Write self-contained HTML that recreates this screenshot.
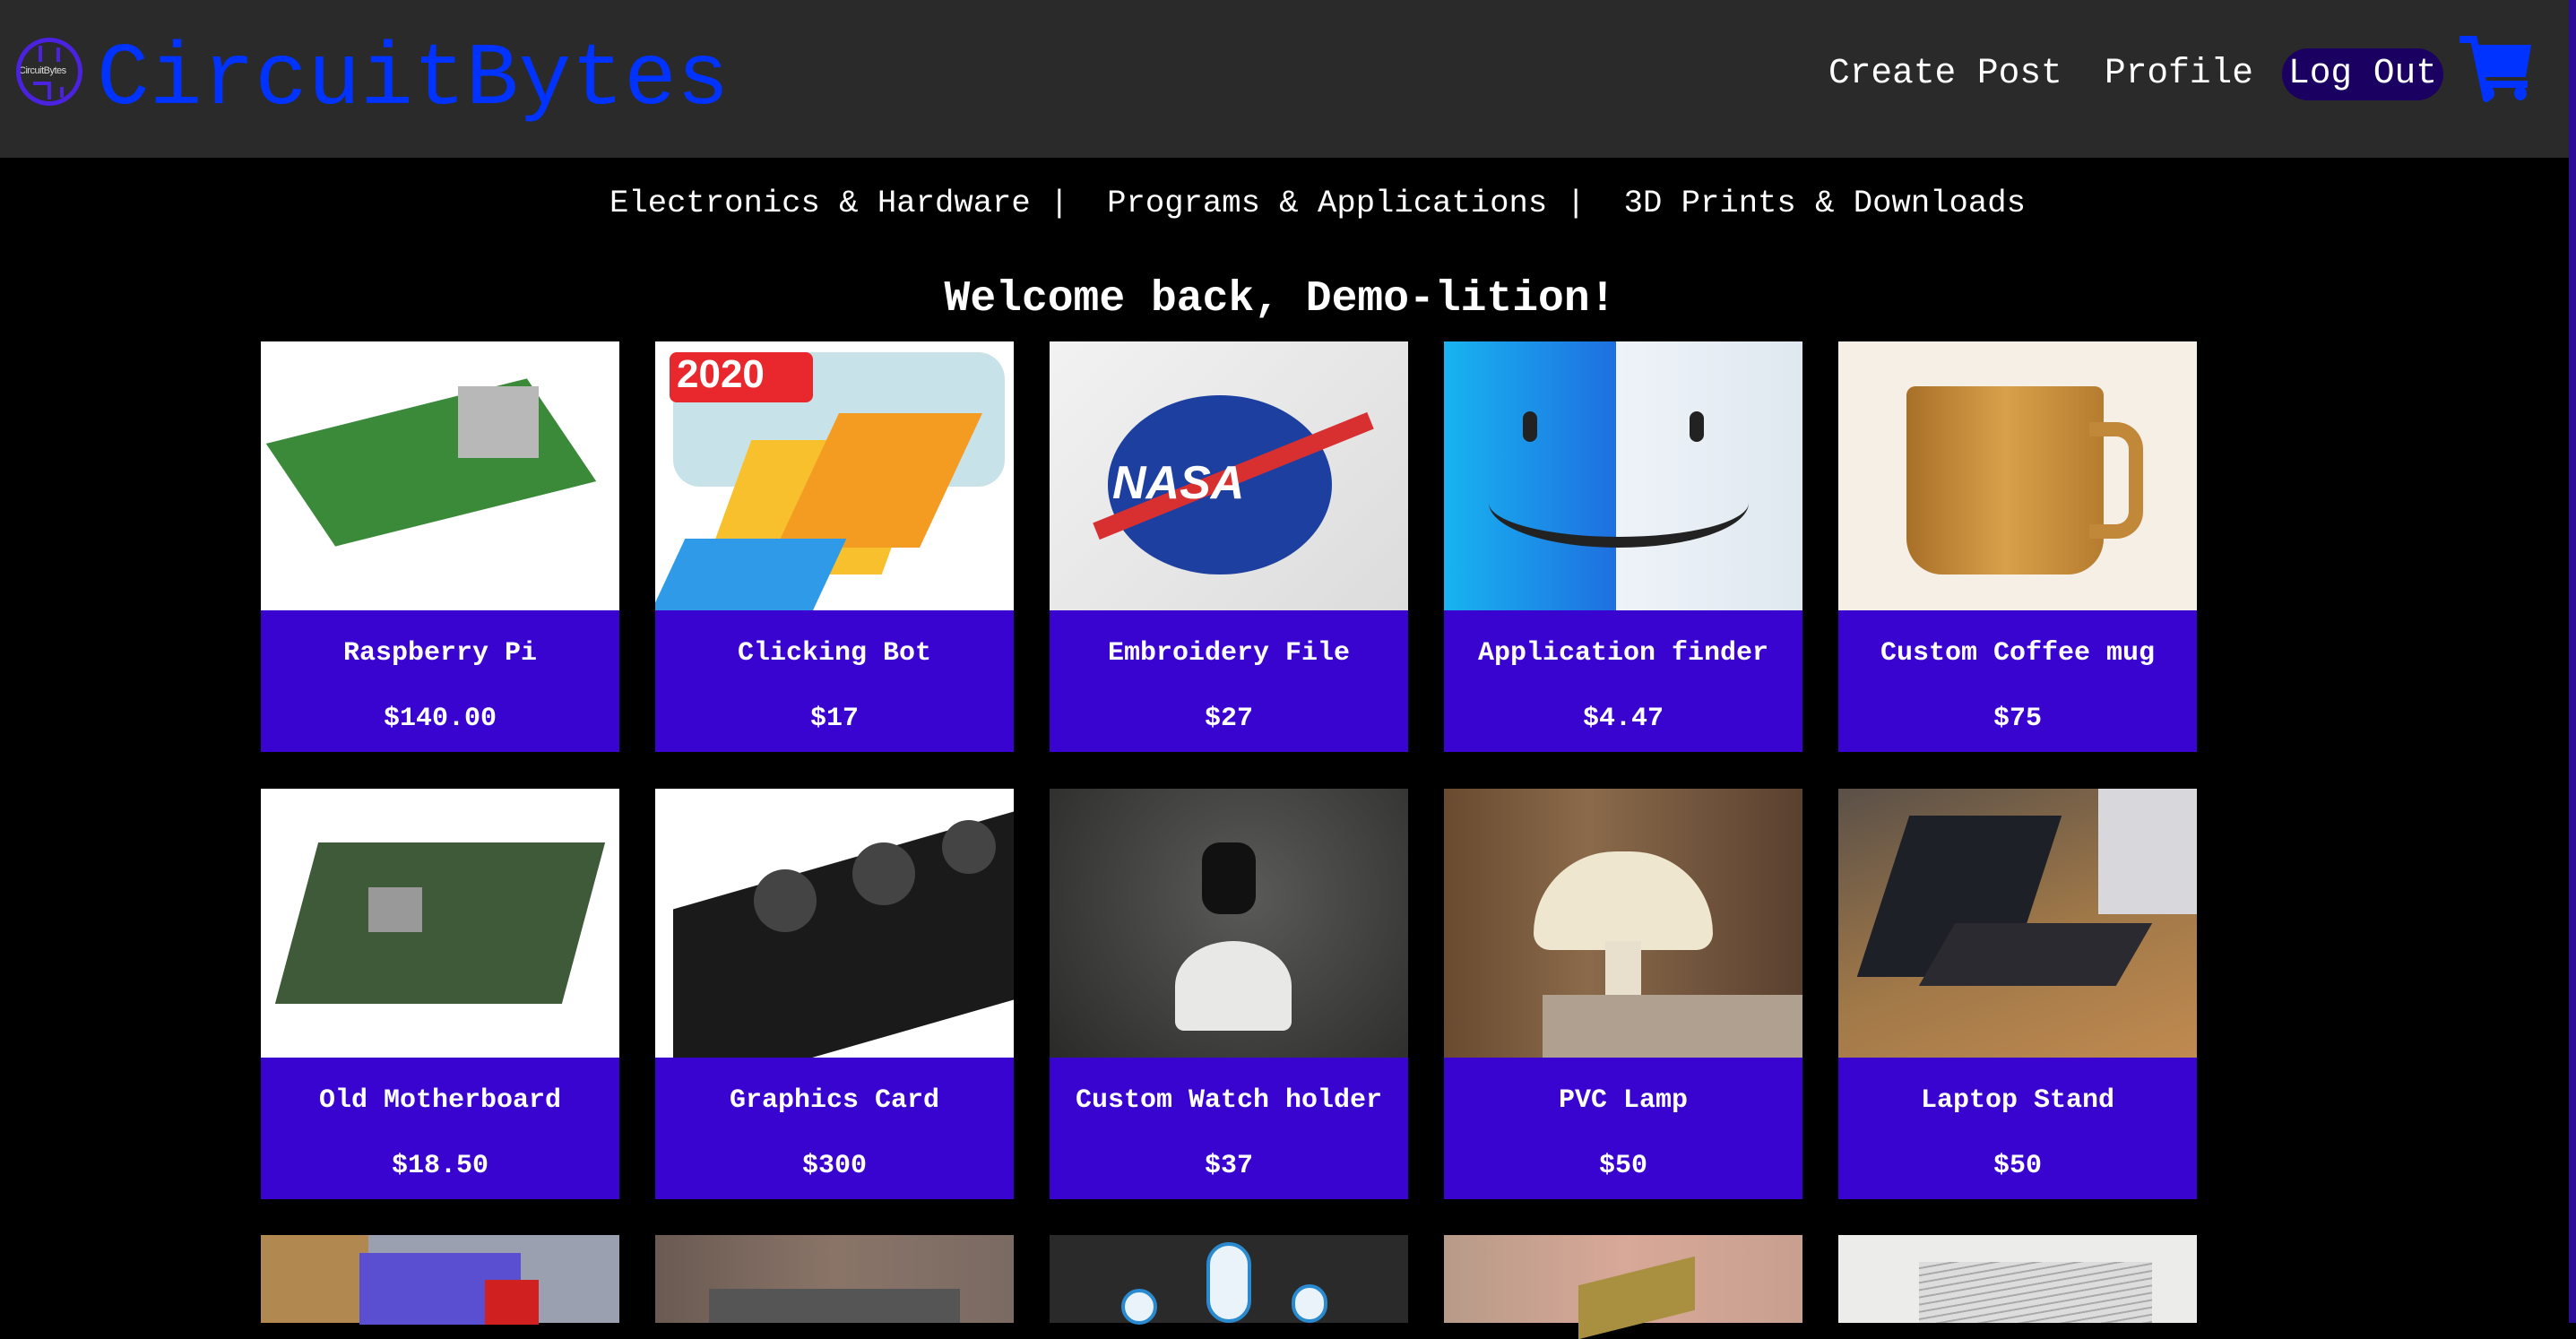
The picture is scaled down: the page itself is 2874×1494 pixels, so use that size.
<!DOCTYPE html>
<html><head><meta charset="utf-8"><style>
*{margin:0;padding:0;box-sizing:border-box}
html,body{width:2874px;height:1476px;overflow:hidden;background:#000;font-family:"Liberation Mono",monospace}
.hdr{position:absolute;left:0;top:0;width:2874px;height:176px;background:#2a2a2a}
.bar{position:absolute;left:2866px;top:0;width:8px;height:1476px;background:#2a0c96}
.logo{position:absolute;left:18px;top:42px;width:74px;height:76px;border-radius:50%;border:5px solid #4a22e0;background:#2a2a2a;overflow:hidden}
.logo i{position:absolute;background:#4a22e0}
.logo span{position:absolute;left:-2px;top:26px;font:11px "Liberation Sans",sans-serif;color:#ddd;letter-spacing:-0.5px}
.brand{position:absolute;left:108px;top:40px;font-size:98px;color:#0033ff;line-height:100px}
.nav{position:absolute;top:58px;font-size:39.5px;color:#fff;line-height:48px}
.pill{position:absolute;left:2546px;top:54px;width:180px;height:58px;border-radius:29px;background:#1a0060}
.cats{position:absolute;left:37px;width:2866px;top:204px;text-align:center;color:#fff;font-size:35.6px;line-height:46px;white-space:pre}
.wel{position:absolute;left:0;width:2856px;top:306px;text-align:center;color:#fff;font-size:48px;font-weight:bold;line-height:56px}
.card{position:absolute;width:400px;height:458px;background:#3a04d0}
.img{position:absolute;left:0;top:0;width:400px;height:300px;overflow:hidden}
.t{position:absolute;left:0;width:400px;top:330px;text-align:center;color:#fff;font-weight:bold;font-size:30px;line-height:36px}
.p{position:absolute;left:0;width:400px;top:403px;text-align:center;color:#fff;font-weight:bold;font-size:30px;line-height:36px}
.a{position:absolute}
</style></head><body>
<div class="hdr"></div>
<div class="logo"><i style="left:20px;top:4px;width:4px;height:18px"></i><i style="left:40px;top:6px;width:4px;height:16px"></i><i style="left:14px;top:44px;width:20px;height:4px"></i><i style="left:30px;top:48px;width:4px;height:16px"></i><i style="left:44px;top:50px;width:4px;height:12px"></i><span>CircuitBytes</span></div>
<div class="brand">CircuitBytes</div>
<div class="nav" style="left:2040px">Create Post</div>
<div class="nav" style="left:2348px">Profile</div>
<div class="pill"></div>
<div class="nav" style="left:2553px">Log Out</div>
<svg class="a" style="left:2744px;top:40px" width="84" height="76" viewBox="0 0 84 76">
<path d="M2 4 H16 L30 70" stroke="#0033ff" stroke-width="8" fill="none" stroke-linecap="round"/>
<path d="M18 10 H80 L74 46 H28 Z" fill="#0033ff"/>
<rect x="26" y="50" width="50" height="8" fill="#0033ff"/>
<ellipse cx="32" cy="64" rx="7" ry="8" fill="#0033ff"/><ellipse cx="68" cy="64" rx="7" ry="8" fill="#0033ff"/>
</svg>
<div class="bar"></div>
<div class="cats">Electronics &amp; Hardware |  Programs &amp; Applications |  3D Prints &amp; Downloads</div>
<div class="wel">Welcome back, Demo-lition!</div>

<!-- row 1 -->
<div class="card" style="left:291px;top:381px"><div class="img" style="background:#fff"><div class="a" style="left:40px;top:70px;width:300px;height:130px;background:#3a8a3a;transform:rotate(-14deg) skewX(20deg)"></div><div class="a" style="left:220px;top:50px;width:90px;height:80px;background:#b8b8b8"></div></div><div class="t">Raspberry Pi</div><div class="p">$140.00</div></div>
<div class="card" style="left:731px;top:381px"><div class="img" style="background:#fff"><div class="a" style="left:20px;top:12px;width:370px;height:150px;border-radius:30px;background:#c8e2ea"></div><div class="a" style="left:16px;top:12px;width:160px;height:56px;border-radius:8px;background:#e8282c"></div><div class="a" style="left:24px;top:12px;color:#fff;font:bold 44px 'Liberation Sans',sans-serif">2020</div><div class="a" style="left:80px;top:110px;width:200px;height:150px;background:#f7c02c;transform:skewX(-20deg)"></div><div class="a" style="left:170px;top:80px;width:160px;height:150px;background:#f49c22;transform:skewX(-25deg)"></div><div class="a" style="left:10px;top:220px;width:180px;height:100px;background:#2f9ae8;transform:skewX(-25deg)"></div></div><div class="t">Clicking Bot</div><div class="p">$17</div></div>
<div class="card" style="left:1171px;top:381px"><div class="img" style="background:linear-gradient(135deg,#f2f2f2,#dcdcdc)"><div class="a" style="left:65px;top:60px;width:250px;height:200px;border-radius:50%;background:#1c3fa0"></div><div class="a" style="left:40px;top:140px;width:330px;height:20px;background:#d83030;transform:rotate(-22deg)"></div><div class="a" style="left:70px;top:128px;color:#fff;font:bold italic 52px 'Liberation Sans',sans-serif">NASA</div></div><div class="t">Embroidery File</div><div class="p">$27</div></div>
<div class="card" style="left:1611px;top:381px"><div class="img" style="background:linear-gradient(90deg,#18b4f0 0%,#1e6fe0 48%,#eef3f8 48%,#dfe8f0 100%)"><div class="a" style="left:88px;top:78px;width:16px;height:34px;border-radius:8px;background:#222"></div><div class="a" style="left:274px;top:78px;width:16px;height:34px;border-radius:8px;background:#222"></div><div class="a" style="left:50px;top:130px;width:290px;height:100px;border-bottom:12px solid #222;border-radius:0 0 50% 50%"></div></div><div class="t">Application finder</div><div class="p">$4.47</div></div>
<div class="card" style="left:2051px;top:381px"><div class="img" style="background:#f6efe6"><div class="a" style="left:76px;top:50px;width:220px;height:210px;border-radius:10px 10px 40px 40px;background:linear-gradient(90deg,#a87028,#d9a04a,#b57c30)"></div><div class="a" style="left:280px;top:90px;width:60px;height:130px;border:16px solid #c08838;border-left:none;border-radius:0 30px 30px 0"></div></div><div class="t">Custom Coffee mug</div><div class="p">$75</div></div>

<!-- row 2 -->
<div class="card" style="left:291px;top:880px"><div class="img" style="background:#fff"><div class="a" style="left:40px;top:60px;width:320px;height:180px;background:#3f5a38;transform:skewX(-15deg)"></div><div class="a" style="left:120px;top:110px;width:60px;height:50px;background:#999"></div></div><div class="t">Old Motherboard</div><div class="p">$18.50</div></div>
<div class="card" style="left:731px;top:880px"><div class="img" style="background:#fff"><div class="a" style="left:20px;top:20px;width:380px;height:210px;background:#1a1a1a;transform:skewY(-16deg) translateY(60px)"></div><div class="a" style="left:110px;top:90px;width:70px;height:70px;border-radius:50%;background:#444"></div><div class="a" style="left:220px;top:60px;width:70px;height:70px;border-radius:50%;background:#444"></div><div class="a" style="left:320px;top:35px;width:60px;height:60px;border-radius:50%;background:#444"></div></div><div class="t">Graphics Card</div><div class="p">$300</div></div>
<div class="card" style="left:1171px;top:880px"><div class="img" style="background:radial-gradient(circle at 55% 40%,#5a5a58,#2a2a28)"><div class="a" style="left:170px;top:60px;width:60px;height:80px;border-radius:20px;background:#111"></div><div class="a" style="left:140px;top:170px;width:130px;height:100px;border-radius:50% 50% 10px 10px;background:#e8e8e6"></div></div><div class="t">Custom Watch holder</div><div class="p">$37</div></div>
<div class="card" style="left:1611px;top:880px"><div class="img" style="background:linear-gradient(90deg,#6a4a30,#8a6a4a 40%,#5a4030)"><div class="a" style="left:100px;top:70px;width:200px;height:110px;border-radius:100px 100px 20px 20px;background:#efe6d0"></div><div class="a" style="left:180px;top:170px;width:40px;height:80px;background:#e8e0cc"></div><div class="a" style="left:110px;top:230px;width:290px;height:70px;background:#b0a090"></div></div><div class="t">PVC Lamp</div><div class="p">$50</div></div>
<div class="card" style="left:2051px;top:880px"><div class="img" style="background:linear-gradient(160deg,#5a5048,#a07848 55%,#c08a50)"><div class="a" style="left:50px;top:30px;width:170px;height:180px;background:#1e2028;transform:skewX(-18deg)"></div><div class="a" style="left:110px;top:150px;width:220px;height:70px;background:#2a2a30;transform:skewX(-30deg)"></div><div class="a" style="left:290px;top:0;width:110px;height:140px;background:#d8d8dc"></div></div><div class="t">Laptop Stand</div><div class="p">$50</div></div>

<!-- row 3 partial -->
<div class="a" style="left:291px;top:1378px;width:400px;height:98px;background:linear-gradient(90deg,#b08850 0 30%,#9aa0b0 30%)"><div class="a" style="left:110px;top:20px;width:180px;height:80px;background:#5a4fd0"></div><div class="a" style="left:250px;top:50px;width:60px;height:50px;background:#d02020"></div></div>
<div class="a" style="left:731px;top:1378px;width:400px;height:98px;background:linear-gradient(90deg,#6a5a52,#8a7468 50%,#7a6a62)"><div class="a" style="left:60px;top:60px;width:280px;height:38px;background:#555"></div></div>
<div class="a" style="left:1171px;top:1378px;width:400px;height:98px;background:#2a2a2a"><div class="a" style="left:175px;top:8px;width:50px;height:90px;border-radius:25px;background:#eaf2fa;border:4px solid #2a8ad0"></div><div class="a" style="left:80px;top:60px;width:40px;height:40px;border-radius:20px;background:#eaf2fa;border:4px solid #2a8ad0"></div><div class="a" style="left:270px;top:55px;width:40px;height:43px;border-radius:20px;background:#eaf2fa;border:4px solid #2a8ad0"></div></div>
<div class="a" style="left:1611px;top:1378px;width:400px;height:98px;background:linear-gradient(90deg,#b89a88,#d8a898 50%,#c8a090)"><div class="a" style="left:150px;top:40px;width:130px;height:60px;background:#a89040;transform:skewY(-14deg)"></div></div>
<div class="a" style="left:2051px;top:1378px;width:400px;height:98px;background:#ececea"><div class="a" style="left:90px;top:30px;width:260px;height:68px;background:repeating-linear-gradient(170deg,#ddd 0 6px,#aaa 6px 8px)"></div></div>
</body></html>
